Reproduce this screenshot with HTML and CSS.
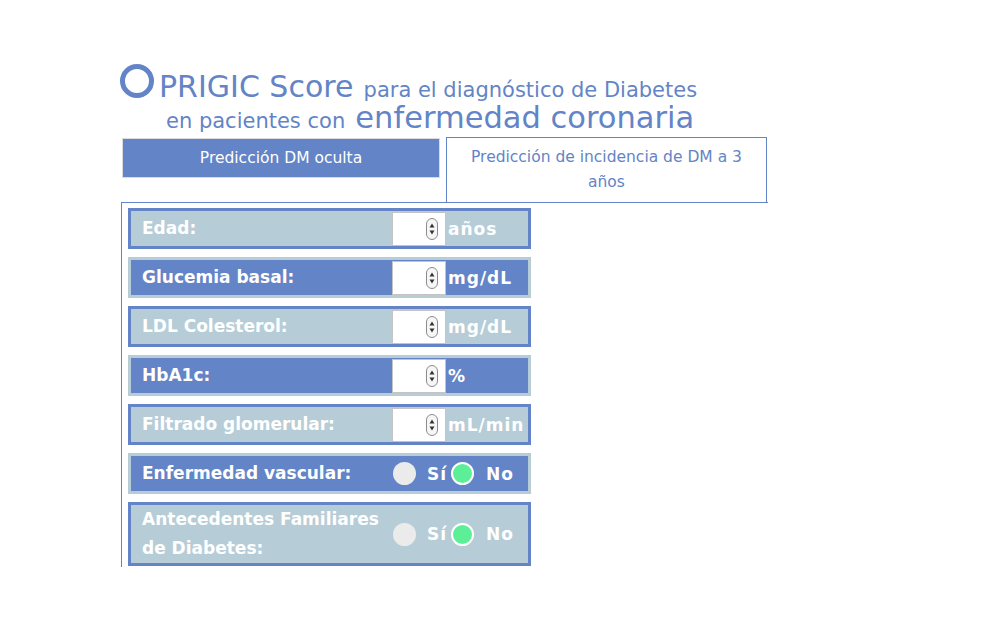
FILE: index.html
```html
<!DOCTYPE html>
<html lang="es">
<head>
    <meta charset="UTF-8">
    <meta name="viewport" content="width=device-width, initial-scale=1.0">
    <title>PRIGIC Score</title>
    <link rel="stylesheet" href="styles.css">
</head>
<body>
    <div class="app">
        <h1 class="title">
            <span class="title-line"><svg class="ring" width="34" height="34" viewBox="0 0 34 34"><circle cx="17" cy="17" r="14.5" fill="none" stroke="#6384c6" stroke-width="5"/></svg><span class="big">PRIGIC Score</span> <span class="small">para el diagnóstico de Diabetes</span></span>
            <span class="title-line title-line-2"><span class="small">en pacientes con</span> <span class="big big-2">enfermedad coronaria</span></span>
        </h1>

        <div class="tabs">
            <div class="tab tab-active">Predicción DM oculta</div>
            <div class="tab tab-other">Predicción de incidencia de DM a 3 años</div>
        </div>

        <div class="panel">
            <div class="field field-light">
                <label class="field-label">Edad:</label>
                <div class="num-box"><input type="text"><svg class="spin" width="12" height="22" viewBox="0 0 12 22"><rect x="0.5" y="0.5" width="11" height="21" rx="5.5" fill="#f6f6f6" stroke="#8c8c8c"/><path d="M6 5.5 L8.5 9.5 L3.5 9.5 Z" fill="#333"/><path d="M3.5 12.5 L8.5 12.5 L6 16.5 Z" fill="#333"/></svg></div>
                <span class="unit">años</span>
            </div>
            <div class="field field-dark">
                <label class="field-label">Glucemia basal:</label>
                <div class="num-box"><input type="text"><svg class="spin" width="12" height="22" viewBox="0 0 12 22"><rect x="0.5" y="0.5" width="11" height="21" rx="5.5" fill="#f6f6f6" stroke="#8c8c8c"/><path d="M6 5.5 L8.5 9.5 L3.5 9.5 Z" fill="#333"/><path d="M3.5 12.5 L8.5 12.5 L6 16.5 Z" fill="#333"/></svg></div>
                <span class="unit">mg/dL</span>
            </div>
            <div class="field field-light">
                <label class="field-label">LDL Colesterol:</label>
                <div class="num-box"><input type="text"><svg class="spin" width="12" height="22" viewBox="0 0 12 22"><rect x="0.5" y="0.5" width="11" height="21" rx="5.5" fill="#f6f6f6" stroke="#8c8c8c"/><path d="M6 5.5 L8.5 9.5 L3.5 9.5 Z" fill="#333"/><path d="M3.5 12.5 L8.5 12.5 L6 16.5 Z" fill="#333"/></svg></div>
                <span class="unit">mg/dL</span>
            </div>
            <div class="field field-dark">
                <label class="field-label">HbA1c:</label>
                <div class="num-box"><input type="text"><svg class="spin" width="12" height="22" viewBox="0 0 12 22"><rect x="0.5" y="0.5" width="11" height="21" rx="5.5" fill="#f6f6f6" stroke="#8c8c8c"/><path d="M6 5.5 L8.5 9.5 L3.5 9.5 Z" fill="#333"/><path d="M3.5 12.5 L8.5 12.5 L6 16.5 Z" fill="#333"/></svg></div>
                <span class="unit">%</span>
            </div>
            <div class="field field-light">
                <label class="field-label">Filtrado glomerular:</label>
                <div class="num-box"><input type="text"><svg class="spin" width="12" height="22" viewBox="0 0 12 22"><rect x="0.5" y="0.5" width="11" height="21" rx="5.5" fill="#f6f6f6" stroke="#8c8c8c"/><path d="M6 5.5 L8.5 9.5 L3.5 9.5 Z" fill="#333"/><path d="M3.5 12.5 L8.5 12.5 L6 16.5 Z" fill="#333"/></svg></div>
                <span class="unit">mL/min</span>
            </div>
            <div class="field field-dark">
                <label class="field-label">Enfermedad vascular:</label>
                <input class="radio" type="radio" name="vascular"><span class="opt">Sí</span>
                <input class="radio" type="radio" name="vascular" checked><span class="opt opt-no">No</span>
            </div>
            <div class="field field-light">
                <label class="field-label">Antecedentes Familiares de Diabetes:</label>
                <input class="radio" type="radio" name="familia"><span class="opt">Sí</span>
                <input class="radio" type="radio" name="familia" checked><span class="opt opt-no">No</span>
            </div>
        </div>
    </div>
</body>
</html>
```

FILE: styles.css
```css
body {
    font-family: "DejaVu Sans", Verdana, sans-serif;
    background: #fff;
    margin: 0;
    padding: 0;
}
.app {
    padding: 64px 0 0 121px;
}

/* Cabecera */
.title {
    margin: 0 0 0 -1px;
    font-weight: normal;
    color: #6384c6;
}
.title-line {
    display: block;
    line-height: 31px;
    white-space: nowrap;
}
.title-line-2 {
    padding-left: 46px;
}
.ring {
    vertical-align: -1px;
    margin-right: 5px;
}
.big {
    font-size: 30px;
}
.big-2 {
    font-size: 30.5px;
}
.small {
    font-size: 21px;
    line-height: 1;
}

/* Pestañas */
.tabs {
    display: flex;
    align-items: flex-start;
    gap: 6px;
    margin-top: 4px;
    padding-left: 1px;
}
.tab {
    box-sizing: border-box;
    font-size: 15.5px;
    text-align: center;
}
.tab-active {
    width: 318px;
    height: 40px;
    margin-top: 1px;
    line-height: 38px;
    background: #6384c6;
    border: 1px solid #dcdcdc;
    color: #fff;
}
.tab-other {
    width: 321px;
    height: 65px;
    padding: 7px 15px;
    line-height: 25px;
    border: 1px solid #6384c6;
    border-bottom: none;
    color: #6384c6;
}

/* Panel de campos */
.panel {
    width: 640px;
    border-top: 1px solid #6384c6;
    border-left: 1px solid #6384c6;
    padding: 5px 0 1px 6px;
    display: flex;
    flex-direction: column;
    gap: 8px;
}
.field {
    box-sizing: border-box;
    width: 403px;
    min-height: 41px;
    display: flex;
    align-items: center;
    border: 3px solid;
    color: #fff;
    font-weight: bold;
    font-size: 17px;
}
.field-light {
    background: #b6cdd7;
    border-color: #6384c6;
}
.field-dark {
    background: #6384c6;
    border-color: #b6cdd7;
}
.field-label {
    box-sizing: border-box;
    width: 261px;
    padding-left: 11px;
    line-height: 29px;
}
.num-box {
    box-sizing: border-box;
    width: 54px;
    height: 34px;
    display: flex;
    align-items: center;
    background: #fff;
    border: 1px solid #c4c4c4;
}
.num-box input {
    width: 30px;
    border: none;
    outline: none;
    padding: 0;
    margin: 0 3px 0 0;
    background: transparent;
}
.spin {
    display: block;
}
.unit {
    margin-left: 2px;
    letter-spacing: 1px;
    white-space: nowrap;
}

/* Botones de radio */
.radio {
    appearance: none;
    -webkit-appearance: none;
    box-sizing: border-box;
    width: 23px;
    height: 23px;
    margin: 0 0 0 1px;
    border-radius: 50%;
    background: #ebebeb;
}
.radio:checked {
    background: #5cef97;
    border: 2px solid #fff;
    margin-left: 4px;
}
.opt {
    margin-left: 11px;
    letter-spacing: 1px;
}
.opt-no {
    margin-left: 12px;
}
```
